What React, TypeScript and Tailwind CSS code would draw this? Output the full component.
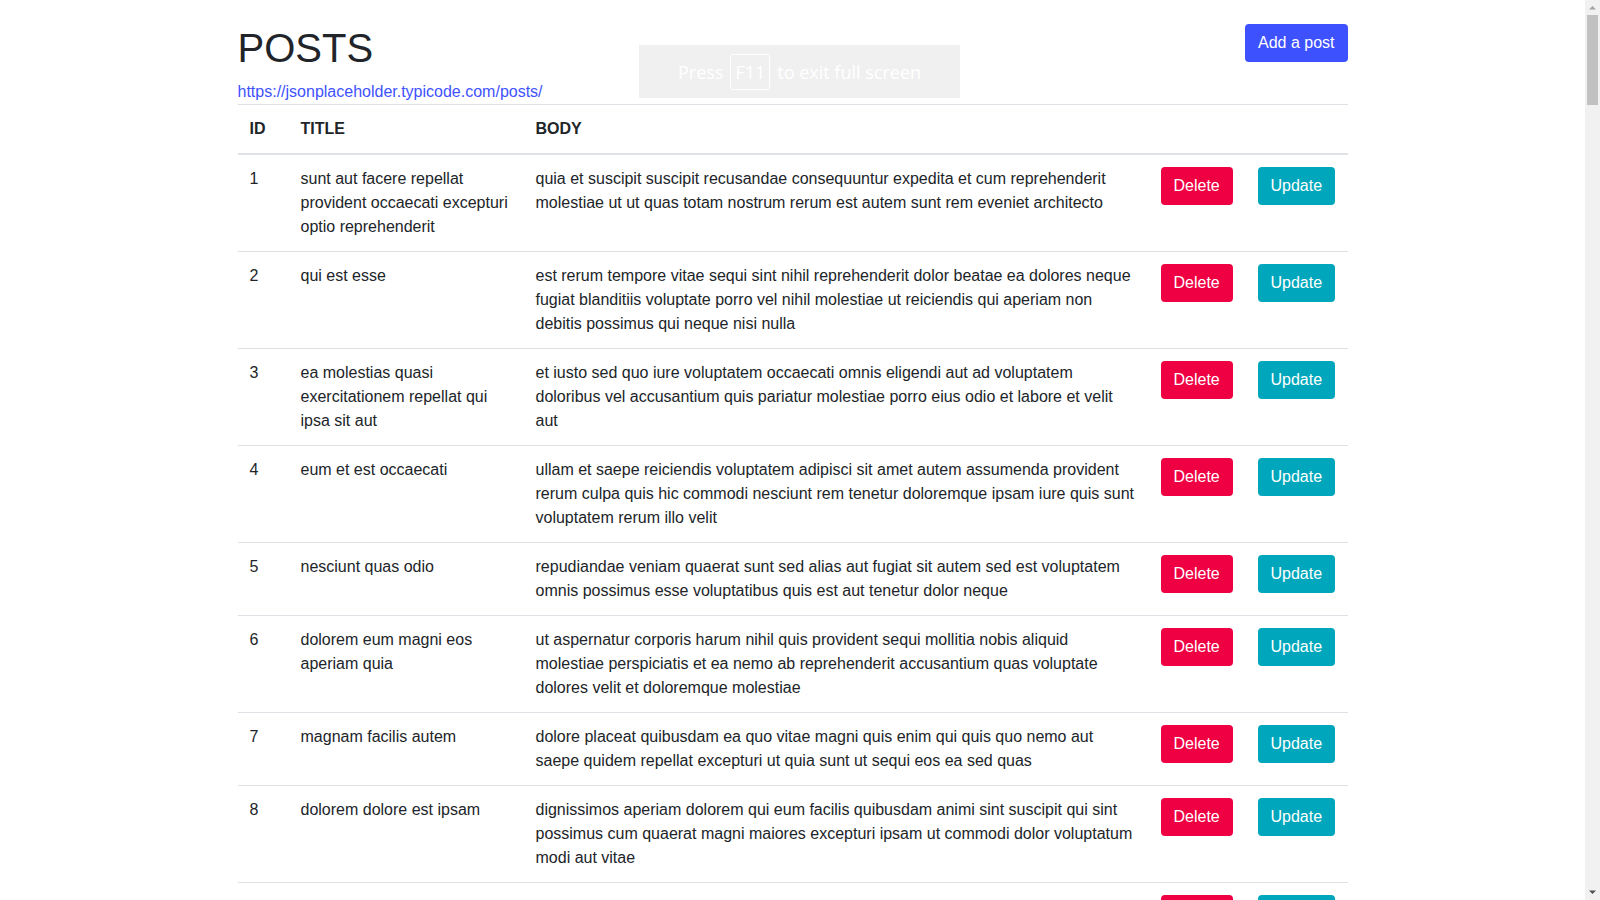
import { useState } from 'react';

type Post = { id: number; title: string; body: string };

const initialPosts: Post[] = [
  {
    id: 1,
    title: 'sunt aut facere repellat provident occaecati excepturi optio reprehenderit',
    body: 'quia et suscipit\nsuscipit recusandae consequuntur expedita et cum\nreprehenderit molestiae ut ut quas totam\nnostrum rerum est autem sunt rem eveniet architecto',
  },
  {
    id: 2,
    title: 'qui est esse',
    body: 'est rerum tempore vitae\nsequi sint nihil reprehenderit dolor beatae ea dolores neque\nfugiat blanditiis voluptate porro vel nihil molestiae ut reiciendis\nqui aperiam non debitis possimus qui neque nisi nulla',
  },
  {
    id: 3,
    title: 'ea molestias quasi exercitationem repellat qui ipsa sit aut',
    body: 'et iusto sed quo iure\nvoluptatem occaecati omnis eligendi aut ad\nvoluptatem doloribus vel accusantium quis pariatur\nmolestiae porro eius odio et labore et velit aut',
  },
  {
    id: 4,
    title: 'eum et est occaecati',
    body: 'ullam et saepe reiciendis voluptatem adipisci\nsit amet autem assumenda provident rerum culpa\nquis hic commodi nesciunt rem tenetur doloremque ipsam iure\nquis sunt voluptatem rerum illo velit',
  },
  {
    id: 5,
    title: 'nesciunt quas odio',
    body: 'repudiandae veniam quaerat sunt sed\nalias aut fugiat sit autem sed est\nvoluptatem omnis possimus esse voluptatibus quis\nest aut tenetur dolor neque',
  },
  {
    id: 6,
    title: 'dolorem eum magni eos aperiam quia',
    body: 'ut aspernatur corporis harum nihil quis provident sequi\nmollitia nobis aliquid molestiae\nperspiciatis et ea nemo ab reprehenderit accusantium quas\nvoluptate dolores velit et doloremque molestiae',
  },
  {
    id: 7,
    title: 'magnam facilis autem',
    body: 'dolore placeat quibusdam ea quo vitae\nmagni quis enim qui quis quo nemo aut saepe\nquidem repellat excepturi ut quia\nsunt ut sequi eos ea sed quas',
  },
  {
    id: 8,
    title: 'dolorem dolore est ipsam',
    body: 'dignissimos aperiam dolorem qui eum\nfacilis quibusdam animi sint suscipit qui sint possimus cum\nquaerat magni maiores excepturi\nipsam ut commodi dolor voluptatum modi aut vitae',
  },
  {
    id: 9,
    title: 'nesciunt iure omnis dolorem tempora et accusantium',
    body: 'consectetur animi nesciunt iure dolore\nenim quia ad\nveniam autem ut quam aut nobis\net est aut quod aut provident voluptas autem voluptas',
  },
  {
    id: 10,
    title: 'optio molestias id quia eum',
    body: 'quo et expedita modi cum officia vel magni\ndoloribus qui repudiandae\nvero nisi sit\nquos veniam quod sed accusamus veritatis error',
  },
];

export default function App() {
  const [posts, setPosts] = useState<Post[]>(initialPosts);

  const removePost = (id: number) => setPosts(posts.filter((p) => p.id !== id));

  return (
    <div className="h-screen flex bg-white text-[#212529] font-['Liberation_Sans',Arial,sans-serif] text-base leading-6">
      <div className="flex-1 overflow-y-hidden">
        <div className="mx-auto w-[1140px] px-[15px] pt-6">
          {/* Header */}
          <div className="flex items-start justify-between">
            <div>
              <h1 className="text-[40px] leading-[48px] font-normal mb-2">POSTS</h1>
              <a href="#" className="block text-[#4152ff] hover:underline">
                https://jsonplaceholder.typicode.com/posts/
              </a>
            </div>
            <button className="h-[38px] px-[13px] rounded bg-[#3d51ff] text-white hover:bg-[#2f42f0]">
              Add a post
            </button>
          </div>

          {/* Posts table */}
          <table className="w-full table-fixed border-collapse text-left">
            <colgroup>
              <col className="w-[51px]" />
              <col className="w-[235px]" />
              <col className="w-[625px]" />
              <col className="w-[97px]" />
              <col className="w-[102px]" />
            </colgroup>
            <thead>
              <tr className="border-t border-[#dee2e6] border-b-2">
                <th className="p-3 font-bold align-bottom">ID</th>
                <th className="p-3 font-bold align-bottom">TITLE</th>
                <th className="p-3 font-bold align-bottom">BODY</th>
                <th className="p-3"></th>
                <th className="p-3"></th>
              </tr>
            </thead>
            <tbody>
              {posts.map((post) => (
                <tr key={post.id} className="border-t border-[#dee2e6]">
                  <td className="p-3 align-top">{post.id}</td>
                  <td className="p-3 align-top">{post.title}</td>
                  <td className="p-3 align-top">{post.body}</td>
                  <td className="p-3 align-top">
                    <button
                      onClick={() => removePost(post.id)}
                      className="h-[38px] px-[13px] rounded bg-[#ee0043] text-white hover:bg-[#d4003b]"
                    >
                      Delete
                    </button>
                  </td>
                  <td className="p-3 align-top">
                    <button className="h-[38px] px-[13px] rounded bg-[#00a7bc] text-white hover:bg-[#0095a8]">
                      Update
                    </button>
                  </td>
                </tr>
              ))}
            </tbody>
          </table>
        </div>
      </div>

      {/* scrollbar track */}
      <div className="w-[15px] h-full bg-[#f1f1f1] flex flex-col items-center">
        <svg width="15" height="15" viewBox="0 0 15 15" className="shrink-0">
          <path d="M4 9.5 L7.5 6 L11 9.5 Z" fill="#a3a3a3" />
        </svg>
        <div className="w-[11px] h-[90px] bg-[#c1c1c1]" />
        <div className="flex-1" />
        <svg width="15" height="15" viewBox="0 0 15 15" className="shrink-0">
          <path d="M4 5.5 L7.5 9 L11 5.5 Z" fill="#505050" />
        </svg>
      </div>

      {/* Fullscreen hint overlay */}
      <div className="fixed left-[639px] top-[45px] w-[321px] h-[53px] bg-[#f0f0f0] flex items-center justify-center gap-[7px] text-white text-[18px] font-['Open_Sans',sans-serif] pointer-events-none">
        <span>Press</span>
        <span className="border border-white rounded-[3px] px-[4px] leading-[34px]">F11</span>
        <span>to exit full screen</span>
      </div>
    </div>
  );
}
